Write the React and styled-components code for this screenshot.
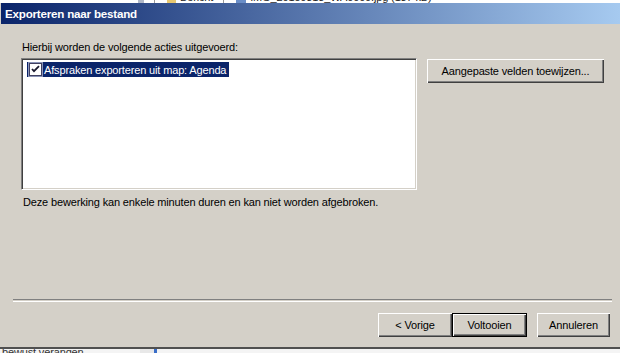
import React from "react";
import styled, { createGlobalStyle, css } from "styled-components";

const Global = createGlobalStyle`
  html, body { margin: 0; padding: 0; background: #ffffff; }
  body { font-family: "Liberation Sans", Arial, sans-serif; font-size: 11px; color: #000; letter-spacing: -0.15px; }
`;

const Page = styled.div`
  width: 620px;
  height: 353px;
  display: flex;
  flex-direction: column;
  overflow: hidden;
`;

const TopStrip = styled.div`
  height: 3px;
  overflow: hidden;
  background: #ffffff;
  flex: none;
`;

const TopInner = styled.div`
  display: flex;
  align-items: center;
  height: 14px;
  margin-top: -10px;
  padding-left: 138px;
  gap: 4px;
  color: #222;
  white-space: nowrap;
`;

const TinyIcon = styled.span`
  width: ${(p) => p.$w || 10}px;
  height: 14px;
  background: ${(p) => p.$c};
  flex: none;
`;

const TopSep = styled.span`
  width: 1px;
  height: 14px;
  background: #9a9a9a;
  margin: 0 8px 0 6px;
`;

const Dialog = styled.div`
  flex: none;
  height: 344px;
  background: #d4d0c8;
  display: flex;
  flex-direction: column;
  padding-left: 1px;
`;

const TitleBar = styled.div`
  height: 21px;
  flex: none;
  display: flex;
  align-items: center;
  padding-left: 4px;
  background: linear-gradient(to right, #0a246a 0%, #a6caf0 100%);
  color: #ffffff;
  font-weight: bold;
  font-size: 11.6px;
  letter-spacing: -0.2px;
`;

const Body = styled.div`
  flex: 1;
  display: flex;
  flex-direction: column;
  padding: 16px 0 0 20px;
`;

const Label = styled.div`
  height: 14px;
  line-height: 14px;
  padding-left: 1px;
`;

const Row = styled.div`
  display: flex;
  align-items: flex-start;
  gap: 10px;
  margin-top: 4px;
`;

const ListBox = styled.div`
  width: 396px;
  height: 132px;
  box-sizing: border-box;
  background: #ffffff;
  border-top: 1px solid #808080;
  border-left: 1px solid #808080;
  border-right: 1px solid #ffffff;
  border-bottom: 1px solid #ffffff;
  box-shadow: inset 1px 1px 0 #404040, inset -1px -1px 0 #d4d0c8;
  padding: 3px 0 0 5px;
`;

const ListItem = styled.div`
  display: inline-flex;
  align-items: center;
  gap: 1px;
  height: 15px;
  padding: 0 3px 0 1px;
  background: ${(p) => (p.$selected ? "#0a246a" : "transparent")};
  color: ${(p) => (p.$selected ? "#ffffff" : "#000")};
  white-space: nowrap;
`;

const CheckWrap = styled.span`
  display: inline-flex;
  width: 15px;
  height: 15px;
  flex: none;
`;

const buttonBase = css`
  font-family: "Liberation Sans", Arial, sans-serif;
  font-size: 11px;
  letter-spacing: -0.15px;
  color: #000;
  background: #d4d0c8;
  box-sizing: border-box;
  border: none;
  padding: 0;
  margin: 0;
  height: 24px;
  box-shadow: inset 1px 1px 0 #ffffff, inset -1px -1px 0 #404040, inset -2px -2px 0 #808080;
`;

const Button = styled.button`
  ${buttonBase};
  width: ${(p) => p.$w}px;
  flex: none;
  margin-top: ${(p) => p.$top || 0}px;
  ${(p) =>
    p.$default &&
    css`
      border: 1px solid #000;
    `}
`;

const Note = styled.div`
  margin-top: 5px;
  padding-left: 2px;
  height: 14px;
  line-height: 14px;
`;

const Spacer = styled.div`
  flex: 1;
`;

const Separator = styled.div`
  margin: 0 8px 0 12px;
  height: 1px;
  border-top: 1px solid #808080;
  border-bottom: 1px solid #ffffff;
  flex: none;
`;

const Footer = styled.div`
  display: flex;
  justify-content: flex-end;
  padding: 11px 10px 10px 0;
  flex: none;
`;

const FooterGap = styled.span`
  width: ${(p) => p.$w}px;
  flex: none;
`;

const BottomStrip = styled.div`
  flex: 1;
  border-top: 2px solid #505050;
  background: #f4f4f4;
  overflow: hidden;
  display: flex;
  align-items: flex-start;
`;

const BottomText = styled.span`
  margin-top: -3px;
  padding-left: 2px;
  color: #333;
  white-space: nowrap;
`;

const BottomMark = styled.span`
  margin-left: 56px;
  width: 14px;
  height: 6px;
  background: #e8e8e8;
  border-right: 3px solid #3a6ec8;
`;

function Check() {
  return (
    <svg width="15" height="15" viewBox="0 0 15 15">
      <rect x="0.5" y="0.5" width="14" height="14" fill="none" stroke="#8a94b8" />
      <rect x="1.5" y="1.5" width="12" height="12" fill="#ffffff" stroke="#404060" />
      <path d="M4 7 L6 9.2 L11 4.2" fill="none" stroke="#1a1a30" strokeWidth="1.8" />
    </svg>
  );
}

export default function App() {
  return (
    <Page>
      <Global />
      <TopStrip>
        <TopInner>
          <TinyIcon $c="#b0b8c8" $w={6} />
          <TopSep />
          <TinyIcon $c="#e8c870" $w={9} />
          <span>Bericht</span>
          <TopSep />
          <TinyIcon $c="#6a8ec8" $w={10} />
          <span>IMG_20150313_WA0000.jpg (137 kB)</span>
        </TopInner>
      </TopStrip>
      <Dialog>
        <TitleBar>Exporteren naar bestand</TitleBar>
        <Body>
          <Label>Hierbij worden de volgende acties uitgevoerd:</Label>
          <Row>
            <ListBox>
              <ListItem $selected>
                <CheckWrap>
                  <Check />
                </CheckWrap>
                Afspraken exporteren uit map: Agenda
              </ListItem>
            </ListBox>
            <Button $w={177} $top={1}>Aangepaste velden toewijzen...</Button>
          </Row>
          <Note>Deze bewerking kan enkele minuten duren en kan niet worden afgebroken.</Note>
          <Spacer />
        </Body>
        <Separator />
        <Footer>
          <Button $w={74}>&lt; Vorige</Button>
          <Button $w={75} $default>Voltooien</Button>
          <FooterGap $w={10} />
          <Button $w={73}>Annuleren</Button>
        </Footer>
      </Dialog>
      <BottomStrip>
        <BottomText>bewust verangen</BottomText>
        <BottomMark />
      </BottomStrip>
    </Page>
  );
}
